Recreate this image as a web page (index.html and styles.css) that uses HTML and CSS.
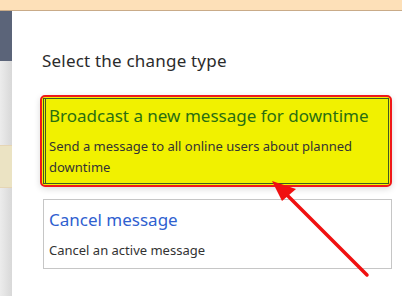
FILE: index.html
```html
<!DOCTYPE html>
<html lang="en">
<head>
    <meta name="viewport" content="width=device-width,initial-scale=1.0">
    <title>Select the change type</title>
    <link rel="stylesheet" href="styles.css">
</head>
<body>

    <div class="top-bar"></div>

    <div class="layout">
        <div class="side-strip">
            <div class="strip-dark"></div>
            <div class="strip-light"></div>
            <div class="strip-note"></div>
            <div class="strip-light grow"></div>
        </div>

        <div class="panel">
            <h2>Select the change type</h2>

            <div class="option selected">
                <div class="option-inner">
                    <div class="option-title">Broadcast a new message for downtime</div>
                    <div class="option-desc">Send a message to all online users about planned downtime</div>
                </div>
            </div>

            <div class="option">
                <div class="option-title">Cancel message</div>
                <div class="option-desc">Cancel an active message</div>
            </div>
        </div>
    </div>

    <!-- annotation arrow over the page -->
    <svg class="arrow" width="402" height="296" viewBox="0 0 402 296">
        <line x1="367" y1="275" x2="284" y2="192" stroke="#f01010" stroke-width="3.5" stroke-linecap="round"/>
        <polygon points="272,181 296,189 282,201" fill="#f01010"/>
    </svg>

</body>
</html>
```

FILE: styles.css
```css
body {
    margin: 0;
    width: 402px;
    height: 296px;
    overflow: hidden;
    background: #fff;
    font-family: 'Noto Sans', 'Open Sans', sans-serif;
    color: #333;
    position: relative;
}

.top-bar {
    height: 10px;
    background: #fde0b8;
    border-bottom: 1px solid #c9ab88;
}

.layout {
    display: flex;
    height: 285px;
}

.side-strip {
    width: 12px;
    display: flex;
    flex-direction: column;
    box-shadow: inset -3px 0 3px rgba(0, 0, 0, 0.08);
}

.strip-dark {
    height: 50px;
    background: #5b6479;
}

.strip-light {
    height: 84px;
    background: linear-gradient(to right, #ececec, #d8d8d8);
}

.strip-light.grow {
    flex: 1;
}

.strip-note {
    height: 41px;
    background: #ebe3c3;
    border-top: 1px solid #e5d5b5;
    border-bottom: 1px solid #e5d5b5;
}

.panel {
    flex: 1;
    padding: 0 10px 0 28px;
}

.panel h2 {
    margin: 39px 0 0 2px;
    font-size: 17px;
    font-weight: 400;
    color: #2b2b2b;
    line-height: 22px;
    letter-spacing: 0.2px;
}

.option {
    margin: 12px 0 0 3px;
    border: 1px solid #c6c6c6;
    padding: 8px 5px 7px 5px;
}

.option-title {
    font-size: 17px;
    color: #2f5fd0;
    line-height: 24px;
}

.option-desc {
    font-size: 13px;
    line-height: 21px;
    margin-top: 8px;
    color: #333;
}

.option.selected {
    margin: 23px 0 0 0;
    border: 2px solid #f01818;
    border-radius: 5px;
    background: #f1f100;
    padding: 1px;
    box-shadow: 0 2px 6px rgba(0, 0, 0, 0.15);
}

.option-inner {
    border: 1px solid #3f5a22;
    border-left: 3px double #3f5a22;
    padding: 5px 4px 5px 3px;
}

.selected .option-title {
    color: #2a6e12;
}

.arrow {
    position: absolute;
    left: 0;
    top: 0;
    pointer-events: none;
}
```
